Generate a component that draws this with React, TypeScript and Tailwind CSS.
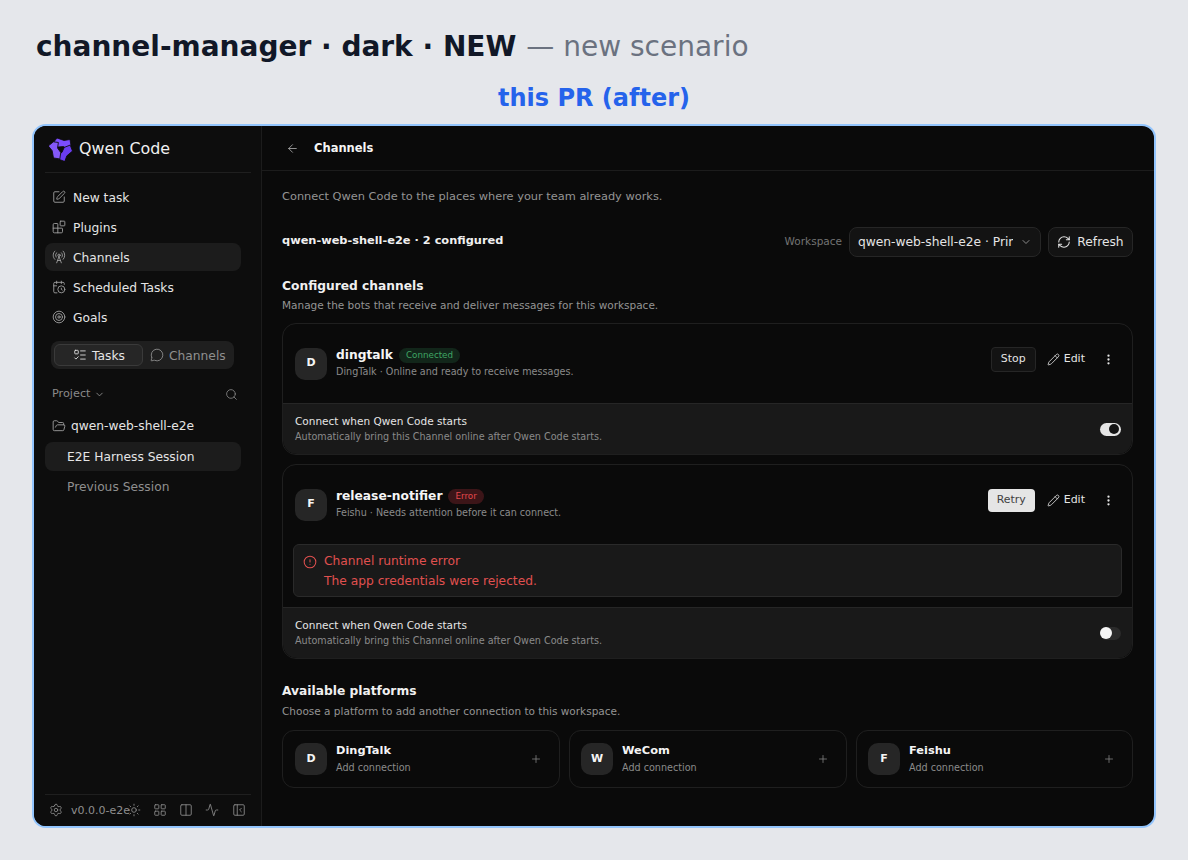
import {
  Activity,
  ArrowLeft,
  ChevronDown,
  CircleAlert,
  Columns2,
  EllipsisVertical,
  FolderOpen,
  LayoutGrid,
  ListTodo,
  MessageCircle,
  PanelLeftClose,
  Pencil,
  Plus,
  RefreshCw,
  Search,
  Settings,
  SquarePen,
  Sun,
  Target,
  Blocks,
  RadioTower,
  CalendarClock,
} from "lucide-react";

function Logo() {
  const arm = "M8 1 L15 3.5 L21 2.5 L22 9 L19 13 L14.5 9.5 L9 10 L4 6 Z";
  return (
    <svg width="24" height="24" viewBox="0 0 24 24" className="shrink-0">
      <path d={arm} fill="#7c4dff" stroke="#0d0d0d" strokeWidth="0.8" />
      <path d={arm} fill="#6a3cf0" stroke="#0d0d0d" strokeWidth="0.8" transform="rotate(120 12 12)" />
      <path d={arm} fill="#8458f8" stroke="#0d0d0d" strokeWidth="0.8" transform="rotate(240 12 12)" />
    </svg>
  );
}

function NavItem({ icon, label, active }: { icon: React.ReactNode; label: string; active?: boolean }) {
  return (
    <div className={`flex h-7 items-center gap-[7px] rounded-lg px-[7px] text-[12.25px] text-[#e5e5e5] ${active ? "bg-[#1c1c1c]" : ""}`}>
      {icon}
      <span className="pt-[2px]">{label}</span>
    </div>
  );
}

function Avatar({ letter }: { letter: string }) {
  return (
    <div className="flex h-8 w-8 shrink-0 items-center justify-center rounded-[10px] bg-[#262626] text-[11px] font-bold text-[#f5f5f5]">
      {letter}
    </div>
  );
}

function AutoConnect({ on }: { on: boolean }) {
  return (
    <div className="flex h-[51px] items-center justify-between rounded-b-[14px] border-t border-[#262626] bg-[#191919] pl-3 pr-[11px]">
      <div>
        <div className="text-[10.5px] leading-[15px] text-[#e5e5e5]">Connect when Qwen Code starts</div>
        <div className="text-[9.625px] leading-[15px] text-[#8a8a8a]">Automatically bring this Channel online after Qwen Code starts.</div>
      </div>
      {on ? (
        <div className="flex h-[13px] w-[21px] items-center justify-end rounded-full bg-[#e5e5e5] pr-[2px]">
          <div className="h-[10px] w-[10px] rounded-full bg-[#141414]" />
        </div>
      ) : (
        <div className="flex h-[13px] w-[21px] items-center rounded-full bg-[#2b2b2b]">
          <div className="h-[12px] w-[12px] rounded-full bg-[#f5f5f5]" />
        </div>
      )}
    </div>
  );
}

function EditMore() {
  return (
    <>
      <div className="ml-[11px] flex items-center gap-[4px] text-[11px] text-[#e5e5e5]">
        <Pencil size={13} strokeWidth={1.5} />
        <span>Edit</span>
      </div>
      <EllipsisVertical size={13} strokeWidth={2.25} className="ml-[17px] mr-[5px] text-[#e5e5e5]" />
    </>
  );
}

function PlatformCard({ letter, name, first }: { letter: string; name: string; first?: boolean }) {
  return (
    <div className={`flex h-[58px] items-center rounded-[12px] border border-[#1f1f1f] pr-[17px] ${first ? "pl-3" : "pl-[11px]"}`}>
      <Avatar letter={letter} />
      <div className="-mt-[1px] ml-[9px] flex-1">
        <div className="mb-[2px] text-[11.375px] font-bold leading-[16px] text-[#f5f5f5]">{name}</div>
        <div className="text-[9.625px] leading-[16px] text-[#8a8a8a]">Add connection</div>
      </div>
      <Plus size={12} strokeWidth={1.5} className="text-[#8a8a8a]" />
    </div>
  );
}

export default function App() {
  const icon = "h-[14px] w-[14px] shrink-0 text-[#a3a3a3]";
  const foot = "h-[14px] w-[14px] shrink-0 text-[#8a8a8a]";

  return (
    <div className="h-[860px] w-[1188px] overflow-hidden bg-[#e5e7eb] px-[32px] font-['DejaVu_Sans',sans-serif]">
      <div className="flex h-[79px] items-start pl-[4px] pt-[33px] text-[28px] leading-[28px]">
        <span className="font-bold text-[#111827]">channel-manager · dark · NEW</span>
        <span className="ml-[10px] text-[#6b7280]">— new scenario</span>
      </div>
      <div className="mb-[7px] flex h-[38px] items-center justify-center text-[24px] font-bold leading-none text-[#2563eb]">this PR (after)</div>

      <div className="flex h-[704px] w-[1124px] overflow-hidden rounded-[14px] border-2 border-[#93c5fd] bg-[#0a0a0a]">
        <aside className="flex w-[228px] shrink-0 flex-col border-r border-[#1c1c1c] bg-[#0d0d0d] pl-[11px] pr-[10px]">
          <div className="flex h-[47px] items-center gap-[6px] border-b border-[#1f1f1f] pl-1">
            <Logo />
            <span className="text-[15.9px] text-[#f0f0f0]">Qwen Code</span>
          </div>
          <nav className="mt-[10px] flex w-[196px] flex-col gap-[2px]">
            <NavItem icon={<SquarePen className={icon} strokeWidth={1.5} />} label="New task" />
            <NavItem icon={<Blocks className={icon} strokeWidth={1.5} />} label="Plugins" />
            <NavItem icon={<RadioTower className={icon} strokeWidth={1.5} />} label="Channels" active />
            <NavItem icon={<CalendarClock className={icon} strokeWidth={1.5} />} label="Scheduled Tasks" />
            <NavItem icon={<Target className={icon} strokeWidth={1.5} />} label="Goals" />
          </nav>
          <div className="ml-[6px] mt-[10px] flex h-7 w-[183px] items-center rounded-lg bg-[#1f1f1f] px-[3px] text-[12.25px]">
            <div className="flex h-[22px] w-[89px] items-center justify-center gap-[5px] rounded-md border border-[#3a3a3a] bg-[#262626] pl-[1px] text-[#e5e5e5]">
              <ListTodo size={14} strokeWidth={1.5} />
              <span className="pt-[2px]">Tasks</span>
            </div>
            <div className="ml-[7px] flex items-center gap-[5px] text-[#8f8f8f]">
              <MessageCircle size={14} strokeWidth={1.5} />
              <span className="pt-[2px]">Channels</span>
            </div>
          </div>
          <div className="mt-[16px] flex h-[18px] w-[196px] items-center justify-between pl-[7px] pr-[3px] text-[11.25px] text-[#8a8a8a]">
            <div className="flex items-center gap-[3px]">
              <span>Project</span>
              <ChevronDown size={11} />
            </div>
            <Search size={13} strokeWidth={1.5} />
          </div>
          <div className="mt-[9px] flex h-[28px] items-center gap-[5px] pl-[7px] text-[12.25px] text-[#e5e5e5]">
            <FolderOpen className={icon} strokeWidth={1.5} />
            <span>qwen-web-shell-e2e</span>
          </div>
          <div className="mt-[2px] flex h-[29px] w-[196px] items-center rounded-lg bg-[#1c1c1c] pl-[22px] pt-[2px] text-[12.25px] text-[#e5e5e5]">E2E Harness Session</div>
          <div className="flex h-[32px] items-center pl-[22px] text-[12.25px] text-[#8f8f8f]">Previous Session</div>
          <div className="mt-auto flex h-[32px] items-center border-t border-[#1f1f1f] pb-[2px] pl-1 text-[11px] text-[#8f8f8f]">
            <Settings className={foot} strokeWidth={1.5} />
            <span className="ml-[8px] pt-[3px]">v0.0.0-e2e</span>
            <Sun className={`${foot} -ml-[3px]`} strokeWidth={1.5} />
            <LayoutGrid className={`${foot} ml-[12px]`} strokeWidth={1.5} />
            <Columns2 className={`${foot} ml-[12px]`} strokeWidth={1.5} />
            <Activity className={`${foot} ml-[12px]`} strokeWidth={1.5} />
            <PanelLeftClose className={`${foot} ml-[13px]`} strokeWidth={1.5} />
          </div>
        </aside>

        <main className="min-w-0 flex-1">
          <header className="flex h-[45px] items-center gap-[15px] border-b border-[#1c1c1c] pl-[24px]">
            <ArrowLeft size={13} strokeWidth={1.5} className="text-[#b0b0b0]" />
            <span className="pt-[2px] text-[11.5px] font-bold text-[#f5f5f5]">Channels</span>
          </header>
          <div className="pl-[20px] pr-[21px]">
            <p className="mt-[17px] text-[11.375px] leading-[16px] text-[#949494]">Connect Qwen Code to the places where your team already works.</p>
            <div className="mt-[23px] flex items-center justify-between">
              <span className="-mt-[2px] text-[11.375px] font-bold text-[#f0f0f0]">qwen-web-shell-e2e · 2 configured</span>
              <div className="flex items-center">
                <span className="text-[10.5px] text-[#737373]">Workspace</span>
                <div className="ml-[7px] flex h-[30px] w-[192px] items-center rounded-lg border border-[#262626] bg-[#131313] pl-[8px] pr-[8px] text-[12.25px] text-[#e5e5e5]">
                  <span className="w-[155px] overflow-hidden whitespace-nowrap">qwen-web-shell-e2e · Primary</span>
                  <ChevronDown size={12} className="ml-auto text-[#8a8a8a]" />
                </div>
                <div className="ml-[7px] flex h-[30px] w-[85px] items-center justify-center gap-[6px] rounded-lg border border-[#262626] bg-[#131313] text-[12.25px] text-[#e5e5e5]">
                  <RefreshCw size={14} strokeWidth={1.75} />
                  <span>Refresh</span>
                </div>
              </div>
            </div>

            <h2 className="mt-[20px] text-[12.25px] font-bold leading-[18px] text-[#f0f0f0]">Configured channels</h2>
            <p className="mt-[2px] text-[10.5px] leading-[16px] text-[#949494]">Manage the bots that receive and deliver messages for this workspace.</p>

            <section className="mt-[10px] overflow-hidden rounded-[14px] border border-[#1f1f1f]">
              <div className="flex h-[79px] items-center pl-3 pr-[12px]">
                <Avatar letter="D" />
                <div className="-mt-[1px] ml-[9px] flex-1">
                  <div className="mb-[1px] flex items-center gap-[6px]">
                    <span className="text-[12.25px] font-bold text-[#f5f5f5]">dingtalk</span>
                    <span className="rounded-full bg-[#12261a] px-[7px] py-[1px] text-[8.75px] text-[#3fa564]">Connected</span>
                  </div>
                  <div className="text-[9.625px] text-[#8a8a8a]">DingTalk · Online and ready to receive messages.</div>
                </div>
                <div className="-mt-[9px] flex items-center">
                  <div className="flex h-[25px] w-[45px] items-center justify-center rounded-[4px] border border-[#262626] bg-[#131313] text-[10.9px] text-[#e5e5e5]">Stop</div>
                  <EditMore />
                </div>
              </div>
              <AutoConnect on />
            </section>

            <section className="mt-[9px] overflow-hidden rounded-[14px] border border-[#1f1f1f]">
              <div className="flex h-[79px] items-center pl-3 pr-[12px]">
                <Avatar letter="F" />
                <div className="-mt-[1px] ml-[9px] flex-1">
                  <div className="mb-[1px] flex items-center gap-[6px]">
                    <span className="text-[12.25px] font-bold text-[#f5f5f5]">release-notifier</span>
                    <span className="rounded-full bg-[#3c1518] px-[7px] py-[1px] text-[8.75px] text-[#e5484d]">Error</span>
                  </div>
                  <div className="text-[9.625px] text-[#8a8a8a]">Feishu · Needs attention before it can connect.</div>
                </div>
                <div className="-mt-[9px] flex items-center">
                  <div className="mr-[1px] flex h-[23px] w-[47px] items-center justify-center rounded-[4px] bg-[#e5e5e5] text-[10.9px] text-[#404040]">Retry</div>
                  <EditMore />
                </div>
              </div>
              <div className="mx-[10px] h-[53px] rounded-md border border-[#2a2a2a] bg-[#191919] pl-[9px] pt-[7px] text-[12.25px] leading-[19px] text-[#e0504f]">
                <div className="flex items-center gap-[7px]">
                  <CircleAlert size={14} strokeWidth={1.75} />
                  <span>Channel runtime error</span>
                </div>
                <div className="mt-[1px] pl-[21px]">The app credentials were rejected.</div>
              </div>
              <div className="mt-[10px]">
                <AutoConnect on={false} />
              </div>
            </section>

            <h2 className="mt-[23px] text-[12.25px] font-bold leading-[18px] text-[#f0f0f0]">Available platforms</h2>
            <p className="mt-[3px] text-[10.5px] leading-[16px] text-[#949494]">Choose a platform to add another connection to this workspace.</p>
            <div className="mt-[11px] grid grid-cols-[278px_278px_1fr] gap-[9px]">
              <PlatformCard letter="D" name="DingTalk" first />
              <PlatformCard letter="W" name="WeCom" />
              <PlatformCard letter="F" name="Feishu" />
            </div>
          </div>
        </main>
      </div>
    </div>
  );
}
